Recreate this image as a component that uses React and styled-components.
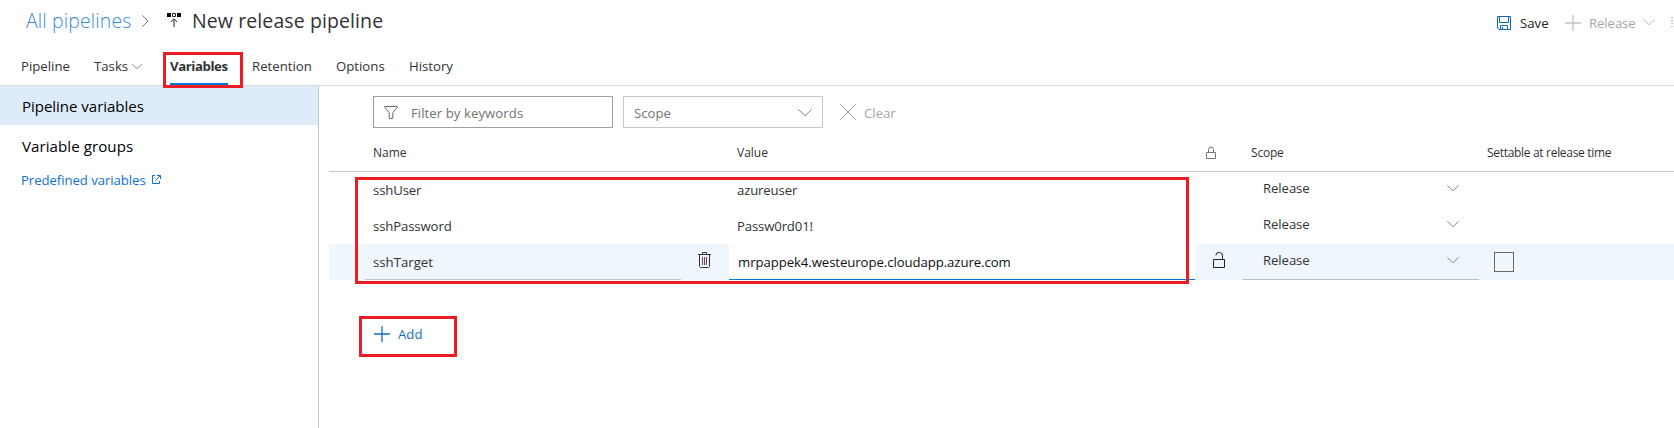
import React from "react";
import styled, { createGlobalStyle, css } from "styled-components";

const Global = createGlobalStyle`
  * { box-sizing: border-box; }
  body { margin: 0; background: #fff; color: #333; font-family: "Open Sans", "Noto Sans", sans-serif; font-size: 13.2px; line-height: 20px; }
  svg { display: block; flex: none; overflow: visible; }
`;

const Page = styled.div`
  width: 1674px;
  height: 428px;
  overflow: hidden;
  display: flex;
  flex-direction: column;
  white-space: nowrap;
`;

const Label = styled.span`
  font-size: ${(p) => p.$size || 13.2}px;
  letter-spacing: ${(p) => p.$track || 0}px;
  padding-top: ${(p) => p.$drop || 0}px;
`;

const Header = styled.header`
  height: 42px;
  display: flex;
  align-items: center;
  padding-left: 26px;
`;

const Crumb = styled.a`
  width: 116px;
  color: #3a8ad6;
  font-size: 19.4px;
  font-weight: 300;
  letter-spacing: 0.15px;
`;

const CrumbIcon = styled.span`
  width: ${(p) => p.$width}px;
  padding-bottom: ${(p) => p.$lift || 0}px;
`;

const Title = styled.h1`
  margin: 0;
  font-size: 19.5px;
  font-weight: 400;
  letter-spacing: 0.1px;
  color: #333;
`;

const Actions = styled.div`
  margin-left: auto;
  width: 177px;
  display: flex;
  align-items: center;
  padding-top: 3px;
`;

const Action = styled.div`
  display: flex;
  align-items: center;
  width: ${(p) => p.$width}px;
  gap: ${(p) => p.$gap}px;
  color: ${(p) => (p.$disabled ? "#a6a6a6" : "#222")};
`;

const ActionChevron = styled.span`
  width: 28px;
  padding-bottom: 2px;
`;

const Tabs = styled.nav`
  height: 44px;
  display: flex;
  padding-left: 21px;
  border-bottom: 1px solid #d9d9d9;
`;

const Tab = styled.div`
  position: relative;
  width: ${(p) => p.$width}px;
  height: 43px;
  padding-top: 14px;
  display: flex;
  align-items: flex-start;
  gap: 4px;
  letter-spacing: ${(p) => p.$track || 0}px;
  ${(p) => p.$active && css`font-weight: 700;`}
  svg { margin-top: 8px; }
`;

const ActiveBar = styled.span`
  position: absolute;
  left: 0;
  bottom: -1px;
  width: 58px;
  height: 3px;
  background: #0078d4;
`;

const Callout = styled.span`
  position: absolute;
  left: ${(p) => p.$left}px;
  top: ${(p) => p.$top}px;
  width: ${(p) => p.$width}px;
  height: ${(p) => p.$height}px;
  border: 3px solid #ed1c24;
  pointer-events: none;
  z-index: 2;
`;

const Body = styled.div`
  flex: 1;
  display: flex;
`;

const Sidebar = styled.aside`
  width: 319px;
  border-right: 1px solid #c8c8c8;
`;

const SideItem = styled.div`
  height: ${(p) => (p.$selected ? 39 : 42)}px;
  padding: ${(p) => (p.$selected ? 10 : 11)}px 0 0 22px;
  background: ${(p) => (p.$selected ? "#deecf9" : "transparent")};
  color: #000;
  font-size: 15.1px;
  letter-spacing: ${(p) => p.$track || 0}px;
`;

const SideLink = styled.a`
  display: flex;
  align-items: center;
  gap: 6px;
  padding: 3px 0 0 21px;
  color: #0f72cc;
  svg { margin-top: -1px; }
`;

const Content = styled.main`
  flex: 1;
  padding: 10px 0 0 10px;
`;

const Filters = styled.div`
  display: flex;
  align-items: center;
  height: 32px;
  margin-left: 44px;
`;

const Field = styled.div`
  display: flex;
  align-items: center;
  width: ${(p) => p.$width}px;
  height: 32px;
  padding: 0 10px;
  margin-right: ${(p) => p.$after}px;
  border: 1px solid ${(p) => (p.$strong ? "#a0a0a0" : "#c8c8c8")};
  color: #737373;
  gap: 13px;
  justify-content: ${(p) => (p.$spread ? "space-between" : "flex-start")};
`;

const Clear = styled.div`
  display: flex;
  align-items: center;
  gap: 8px;
  color: #a6a6a6;
`;

const Table = styled.section`
  position: relative;
  margin-top: 10px;
`;

const rowGrid = css`
  display: grid;
  grid-template-columns: 36px 316px 48px 466px 48px 236px 1fr;
`;

const HeadRow = styled.div`
  ${rowGrid}
  height: 34px;
  align-items: center;
  border-bottom: 1px solid #c4c4c4;
  color: #333;
  font-size: 12px;
`;

const HeadCell = styled.div`
  grid-column: ${(p) => p.$col};
  padding-left: ${(p) => p.$inset}px;
  padding-bottom: 3px;
  letter-spacing: ${(p) => p.$track || 0}px;
`;

const Row = styled.div`
  ${rowGrid}
  height: 36px;
  background: ${(p) => (p.$active ? "#eff6fc" : "transparent")};
`;

const NameCell = styled.div`
  grid-column: 2;
  padding: 8px 0 0 8px;
  letter-spacing: ${(p) => (p.$active ? 0 : -0.14)}px;
  border-bottom: 1px solid ${(p) => (p.$active ? "#c8c8c8" : "transparent")};
`;

const ValueCell = styled.div`
  grid-column: 4;
  padding: 8px 0 0 ${(p) => (p.$active ? 9 : 8)}px;
  letter-spacing: ${(p) => (p.$active ? -0.08 : -0.16)}px;
  ${(p) => p.$active && css`background: #fff; color: #111; border-bottom: 1px solid #0078d4;`}
`;

const IconCell = styled.div`
  grid-column: ${(p) => p.$col};
  padding: 8px 0 0 ${(p) => p.$inset}px;
`;

const ScopeCell = styled.div`
  grid-column: 6;
  display: flex;
  justify-content: space-between;
  padding: 6px 20px 0 20px;
  border-bottom: 1px solid ${(p) => (p.$active ? "#c0c0c0" : "transparent")};
  svg { margin-top: 7px; }
`;

const CheckCell = styled.div`
  grid-column: 7;
  padding: 8px 0 0 15px;
`;

const Checkbox = styled.div`
  width: 20px;
  height: 20px;
  border: 1px solid #666;
`;

const AddButton = styled.div`
  position: relative;
  display: flex;
  align-items: center;
  gap: 8px;
  width: 98px;
  height: 41px;
  margin: 36px 0 0 30px;
  padding: 0 0 5px 15px;
  color: #106ebe;
`;

const Chevron = ({ w = 12, h = 6, color = "#888" }) => (
  <svg width={w} height={h} viewBox={`0 0 ${w} ${h}`} fill="none" stroke={color}>
    <path d={`M.3 .3 ${w / 2} ${h - 0.3} ${w - 0.3} .3`} />
  </svg>
);

const Plus = ({ color }) => (
  <svg width="16" height="16" fill="none" stroke={color} strokeWidth="1.3">
    <path d="M0 8H16M8 0V16" />
  </svg>
);

const SaveIcon = () => (
  <svg width="14" height="14" fill="none" stroke="#1068bd">
    <path d="M.5 .5H13.5V13.5H2L.5 12Z M2.5 .5V6.5H11.5V.5 M3.5 13.5V9.5H10.5V13.5 M5.5 11V13.5" />
  </svg>
);

const ReleaseIcon = () => (
  <svg width="14" height="14">
    <path d="M0 0H4V4H0ZM10 0H14V4H10Z" fill="#000" />
    <path d="M5.5 .5H8.5V3.5H5.5ZM7 14V6M3.8 9 7 5.8 10.2 9" fill="none" stroke="#222" />
  </svg>
);

const FilterIcon = () => (
  <svg width="14" height="13" fill="none" stroke="#6b6b75">
    <path d="M.8 .5H13.2V1.5L8.8 6.5V12.5H5.2V6.5L.8 1.5Z" />
  </svg>
);

const CloseIcon = () => (
  <svg width="16" height="16" fill="none" stroke="#999">
    <path d="M.5 .5 15.5 15.5M15.5 .5 .5 15.5" />
  </svg>
);

const LinkIcon = () => (
  <svg width="9" height="9" fill="none" stroke="#0f72cc">
    <path d="M3 .5H.5V8.5H7.5V6M5 .5H8.5V4M3.5 5.5 8.3 .7" />
  </svg>
);

const LockIcon = () => (
  <svg width="10" height="12" fill="none" stroke="#777">
    <path d="M.5 5.5H9.5V11.5H.5ZM2.5 5.5V2.5A2.5 2.5 0 0 1 7.5 2.5V5.5" />
  </svg>
);

const UnlockIcon = () => (
  <svg width="12" height="16" fill="none" stroke="#222">
    <path d="M.5 7.5H11.5V15.5H.5ZM9.5 7.5V4A3.3 3.3 0 0 0 2.8 3.4" />
  </svg>
);

const TrashIcon = () => (
  <svg width="13" height="16" fill="none" stroke="#333">
    <path d="M0 2.5H13M4.5 2.5V.5H8.5V2.5M1.5 2.5V14.5L2.5 15.5H10.5L11.5 14.5V2.5" />
    <path d="M4.5 5V13M6.5 5V13M8.5 5V13" stroke="#6b3b6b" />
  </svg>
);

const MoreDots = () => (
  <svg width="2" height="11" fill="#bbb">
    <path d="M0 0H2V1H0ZM0 3H2V4H0ZM0 6H2V7H0ZM0 9H2V10H0Z" />
  </svg>
);

const variables = [
  { name: "sshUser", value: "azureuser" },
  { name: "sshPassword", value: "Passw0rd01!" },
  { name: "sshTarget", value: "mrpappek4.westeurope.cloudapp.azure.com", active: true },
];

function VariableRow({ name, value, active }) {
  return (
    <Row $active={active}>
      <NameCell $active={active}>{name}</NameCell>
      {active && <IconCell $col={3} $inset={17}><TrashIcon /></IconCell>}
      <ValueCell $active={active}>{value}</ValueCell>
      {active && <IconCell $col={5} $inset={18}><UnlockIcon /></IconCell>}
      <ScopeCell $active={active}>
        <Label $track={-0.1}>Release</Label>
        <Chevron />
      </ScopeCell>
      {active && <CheckCell><Checkbox /></CheckCell>}
    </Row>
  );
}

export default function App() {
  return (
    <Page>
      <Global />
      <Header>
        <Crumb>All pipelines</Crumb>
        <CrumbIcon $width={25}>
          <svg width="6" height="12" fill="none" stroke="#777"><path d="M.3 .3 6 6 .3 11.7" /></svg>
        </CrumbIcon>
        <CrumbIcon $width={25} $lift={2}><ReleaseIcon /></CrumbIcon>
        <Title>New release pipeline</Title>
        <Actions>
          <Action $width={68} $gap={9}><SaveIcon /><Label>Save</Label></Action>
          <Action $width={78} $gap={8} $disabled><Plus color="#c4c4c4" /><Label $track={-0.1}>Release</Label></Action>
          <ActionChevron><Chevron color="#bbb" /></ActionChevron>
          <MoreDots />
        </Actions>
      </Header>
      <Tabs>
        <Tab $width={73}>Pipeline</Tab>
        <Tab $width={76}>Tasks<Chevron w={10} h={5} /></Tab>
        <Tab $width={82} $active $track={-0.4}>
          Variables
          <ActiveBar />
          <Callout $left={-7} $top={10} $width={80} $height={36} />
        </Tab>
        <Tab $width={84}>Retention</Tab>
        <Tab $width={73}>Options</Tab>
        <Tab $width={60}>History</Tab>
      </Tabs>
      <Body>
        <Sidebar>
          <SideItem $selected $track={-0.06}>Pipeline variables</SideItem>
          <SideItem $track={0.06}>Variable groups</SideItem>
          <SideLink><Label $track={-0.07}>Predefined variables</Label><LinkIcon /></SideLink>
        </Sidebar>
        <Content>
          <Filters>
            <Field $width={240} $after={10} $strong><FilterIcon /><Label $drop={2} $track={0.05}>Filter by keywords</Label></Field>
            <Field $width={200} $after={17} $spread><Label $drop={2}>Scope</Label><Chevron w={14} h={7} /></Field>
            <Clear><CloseIcon /><Label $drop={2}>Clear</Label></Clear>
          </Filters>
          <Table>
            <HeadRow>
              <HeadCell $col={2} $inset={8}>Name</HeadCell>
              <HeadCell $col={4} $inset={8}>Value</HeadCell>
              <HeadCell $col={5} $inset={11}><LockIcon /></HeadCell>
              <HeadCell $col={6} $inset={8} $track={-0.2}>Scope</HeadCell>
              <HeadCell $col={7} $inset={8} $track={-0.31}>Settable at release time</HeadCell>
            </HeadRow>
            {variables.map((v) => <VariableRow key={v.name} {...v} />)}
            <Callout $left={26} $top={39} $width={834} $height={107} />
          </Table>
          <AddButton>
            <Plus color="#106ebe" />
            <Label>Add</Label>
            <Callout $left={0} $top={0} $width={98} $height={41} />
          </AddButton>
        </Content>
      </Body>
    </Page>
  );
}
